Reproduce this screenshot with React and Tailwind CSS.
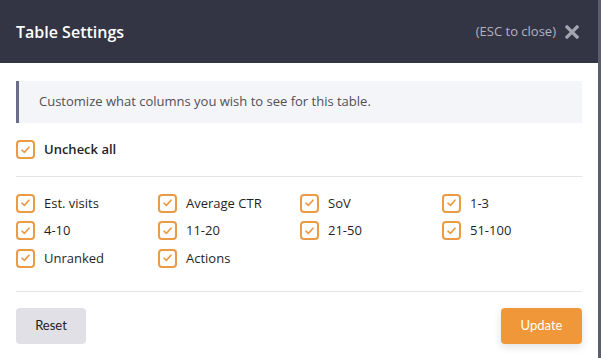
import React, { useState } from "react";

const columns = [
  "Est. visits",
  "Average CTR",
  "SoV",
  "1-3",
  "4-10",
  "11-20",
  "21-50",
  "51-100",
  "Unranked",
  "Actions",
];

const CheckBox = ({ checked, onChange, label, bold }) => (
  <label className="flex items-center cursor-pointer select-none">
    <span
      onClick={onChange}
      className="w-[19px] h-[19px] rounded-[4px] border-2 border-[#eb9a45] bg-white flex items-center justify-center shrink-0"
    >
      {checked && (
        <svg width="9" height="8" viewBox="0 0 9 8" fill="none">
          <path d="M1 4.2 L3.4 6.4 L8 1.2" stroke="#eb9a45" strokeWidth="1.6" strokeLinecap="round" strokeLinejoin="round" />
        </svg>
      )}
    </span>
    <span className={`ml-[9px] text-[13px] text-[#1f1f24] ${bold ? "font-semibold" : "font-medium"}`}>{label}</span>
  </label>
);

const App = () => {
  const [checked, setChecked] = useState(columns.map(() => true));
  const allChecked = checked.every(Boolean);

  return (
    <div className="flex w-[601px] h-[358px] bg-[#5c5e6b] font-['Open_Sans',sans-serif]">
      <div className="w-[598px] h-full bg-white flex flex-col">
        {/* Header */}
        <header className="h-[63px] bg-[#333545] flex items-center justify-between pl-4 pr-[19px] shrink-0">
          <h1 className="text-white text-[16px] font-semibold">Table Settings</h1>
          <div className="flex items-center">
            <span className="text-[13px] text-[#b3b4be]">(ESC to close)</span>
            <svg className="ml-[9px]" width="14" height="14" viewBox="0 0 14 14">
              <path d="M2 2 L12 12 M12 2 L2 12" stroke="#a4a5b0" strokeWidth="3.2" strokeLinecap="square" />
            </svg>
          </div>
        </header>

        <div className="px-4 pt-[18px] flex flex-col">
          {/* Info */}
          <div className="h-[42px] bg-[#f4f5f9] border-l-[3px] border-[#6b6d88] flex items-center pl-[20px]">
            <p className="text-[13px] text-[#4f5058]">Customize what columns you wish to see for this table.</p>
          </div>

          <div className="mt-[17px]">
            <CheckBox
              checked={allChecked}
              bold
              label={allChecked ? "Uncheck all" : "Check all"}
              onChange={() => setChecked(columns.map(() => !allChecked))}
            />
          </div>

          <div className="h-px bg-[#e4e4e8] mt-4" />

          {/* Columns */}
          <div className="grid grid-cols-[142px_142px_142px_142px] gap-y-[8px] mt-[17px]">
            {columns.map((c, i) => (
              <CheckBox
                key={c}
                label={c}
                checked={checked[i]}
                onChange={() => setChecked(checked.map((v, j) => (j === i ? !v : v)))}
              />
            ))}
          </div>

          <div className="h-px bg-[#e4e4e8] mt-[23px]" />

          {/* Footer */}
          <div className="flex justify-between mt-4">
            <button className="w-[70px] h-[36px] rounded-[4px] bg-[#e0e0e6] text-[13px] text-[#222] font-['Lato',sans-serif]">
              Reset
            </button>
            <button className="w-[81px] h-[36px] rounded-[4px] bg-[#f0973a] text-[13px] text-white font-['Lato',sans-serif] shadow-[0_3px_8px_rgba(0,0,0,0.12)]">
              Update
            </button>
          </div>
        </div>
      </div>
    </div>
  );
};

export default App;
